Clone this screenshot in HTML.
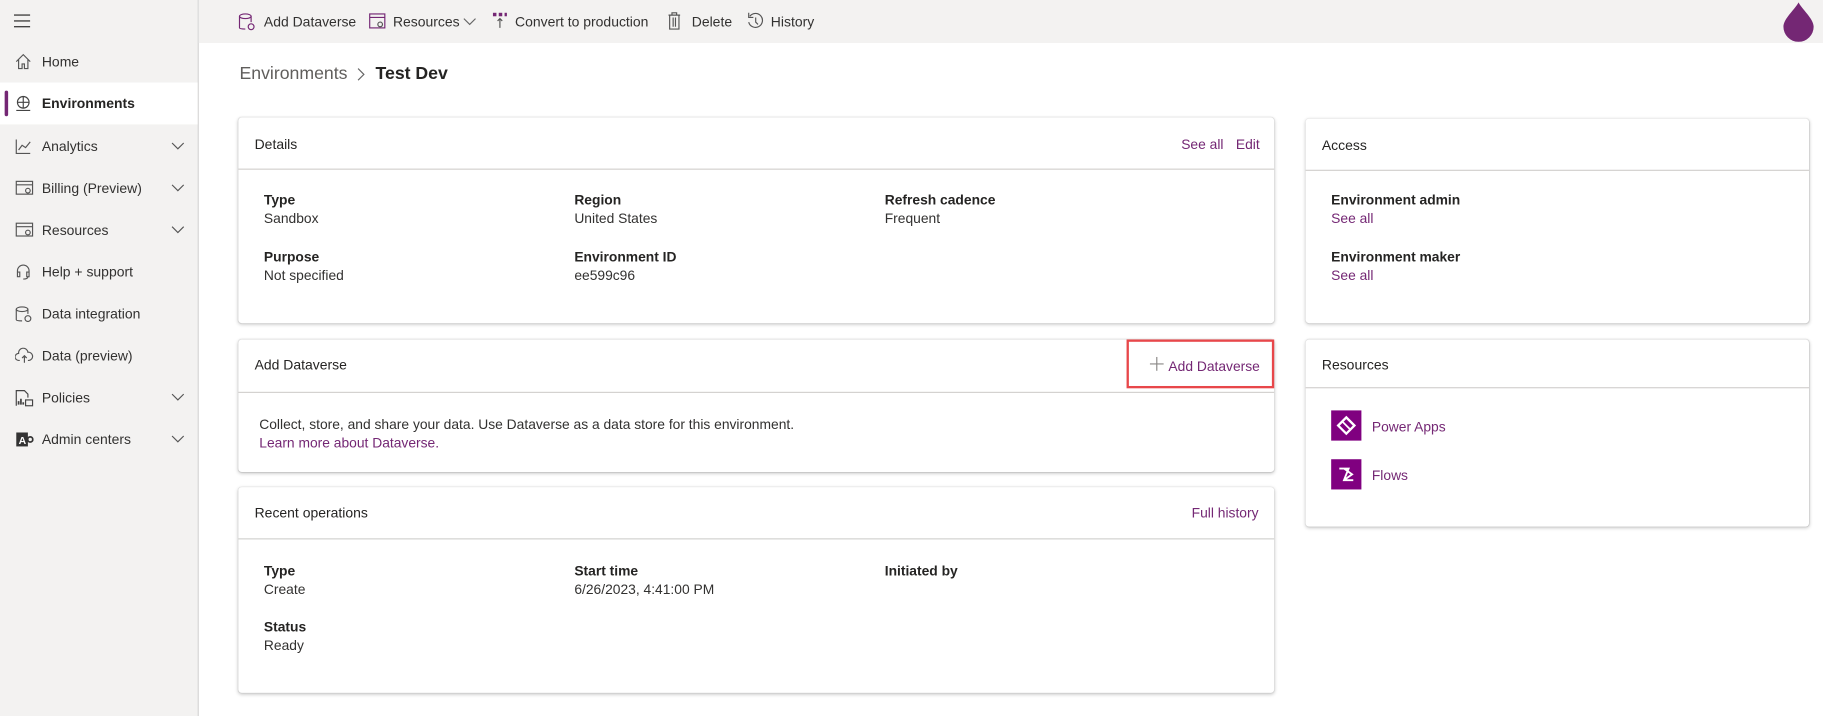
<!DOCTYPE html>
<html><head><meta charset="utf-8"><style>
*{box-sizing:border-box;margin:0;padding:0}
html,body{width:1823px;height:716px;overflow:hidden;background:#fff}
#s{position:absolute;left:0;top:0;width:1568px;height:616px;transform:scale(1.1626);transform-origin:0 0;font-family:"Liberation Sans",sans-serif;color:#323130;font-size:11.9px}
.a{position:absolute;white-space:nowrap}
.side{position:absolute;left:0;top:0;width:171px;height:616px;background:#f3f2f1;border-right:1px solid #d6d6d6}
.top{position:absolute;left:171px;top:0;width:1397px;height:37px;background:#f3f2f1}
.nav{position:absolute;left:0;width:170px;height:36px}
.nav span{position:absolute;left:36px;top:11px;font-size:12px}
.nav svg.i{position:absolute;left:13px;top:11px}
.nav svg.c{position:absolute;left:147px;top:14px}
.card{position:absolute;background:#fff;border-radius:3px;box-shadow:0 1px 3px rgba(0,0,0,.22),0 0 1px rgba(0,0,0,.15)}
.hd{position:absolute;left:0;right:0;border-bottom:1px solid #d2d0ce}
.t{position:absolute;left:14px;font-size:12px;color:#252423}
.lk{color:#742774}
.b{font-weight:bold;color:#252423}
.tb{position:absolute;top:12px;font-size:12px;color:#323130}
</style></head><body><div id="s">
<div class="side">
 <svg class="a" style="left:12px;top:12px" width="14" height="12"><path d="M0 1h14M0 6h14M0 11h14" stroke="#444" stroke-width="1.2"/></svg>
 <div class="nav" style="top:35px"><svg class="i" width="14" height="14"><path d="M1 7L7 1l6 6M3 5v8h3V9h2v4h3V5" fill="none" stroke="#555"/></svg><span>Home</span></div>
 <div class="nav" style="top:71px;background:#fff"><div class="a" style="left:4px;top:7px;width:3px;height:22px;background:#742774;border-radius:2px"></div><svg class="i" width="14" height="14"><circle cx="7" cy="6" r="5" fill="none" stroke="#444"/><path d="M2 6h10M7 1v10M1 13h12" stroke="#444"/></svg><span style="font-weight:bold;color:#252423">Environments</span></div>
 <div class="nav" style="top:108px"><svg class="i" width="14" height="14"><path d="M1 1v12h12M3 10l3-4 3 2 4-5" fill="none" stroke="#555"/></svg><span>Analytics</span><svg class="c" width="12" height="8"><path d="M1 1l5 5 5-5" fill="none" stroke="#555"/></svg></div>
 <div class="nav" style="top:144px"><svg class="i" width="16" height="14"><rect x="1" y="1" width="14" height="11" fill="none" stroke="#555"/><path d="M1 4h14" stroke="#555"/><circle cx="11" cy="9" r="2" fill="none" stroke="#555"/></svg><span>Billing (Preview)</span><svg class="c" width="12" height="8"><path d="M1 1l5 5 5-5" fill="none" stroke="#555"/></svg></div>
 <div class="nav" style="top:180px"><svg class="i" width="16" height="14"><rect x="1" y="1" width="14" height="11" fill="none" stroke="#555"/><path d="M1 4h14" stroke="#555"/><circle cx="11" cy="9" r="2" fill="none" stroke="#555"/></svg><span>Resources</span><svg class="c" width="12" height="8"><path d="M1 1l5 5 5-5" fill="none" stroke="#555"/></svg></div>
 <div class="nav" style="top:216px"><svg class="i" width="14" height="14"><path d="M2 9V6a5 5 0 0110 0v3M2 7h2v4H2zM10 7h2v4h-2zM11 11q0 2-4 2" fill="none" stroke="#555"/></svg><span>Help + support</span></div>
 <div class="nav" style="top:252px"><svg class="i" width="16" height="14"><ellipse cx="6" cy="3" rx="5" ry="2" fill="none" stroke="#555"/><path d="M1 3v9q0 1 5 1M11 3v4" fill="none" stroke="#555"/><circle cx="11" cy="11" r="2.5" fill="none" stroke="#555"/></svg><span>Data integration</span></div>
 <div class="nav" style="top:288px"><svg class="i" width="16" height="14"><path d="M4 11H3a3 3 0 010-6 4 4 0 018-1 3 3 0 011 7h-1M8 13V7M6 9l2-2 2 2" fill="none" stroke="#555"/></svg><span>Data (preview)</span></div>
 <div class="nav" style="top:324px"><svg class="i" width="16" height="15"><path d="M1 14V1h7l3 3v3" fill="none" stroke="#444"/><path d="M3 13V10M5 13V8M7 13v-2" stroke="#444" stroke-width="1.5"/><rect x="9" y="9" width="6" height="5" fill="none" stroke="#444"/></svg><span>Policies</span><svg class="c" width="12" height="8"><path d="M1 1l5 5 5-5" fill="none" stroke="#555"/></svg></div>
 <div class="nav" style="top:360px"><svg class="i" width="16" height="14"><rect x="1" y="1" width="10" height="12" fill="#333"/><text x="3" y="11" font-size="9" fill="#fff" font-family="Liberation Sans" font-weight="bold">A</text><circle cx="13" cy="7" r="2.2" fill="none" stroke="#333" stroke-width="1.5"/></svg><span>Admin centers</span><svg class="c" width="12" height="8"><path d="M1 1l5 5 5-5" fill="none" stroke="#555"/></svg></div>
</div>
<div class="top">
 <svg class="a" style="left:34px;top:11px" width="15" height="16"><ellipse cx="6" cy="3" rx="5" ry="2" fill="none" stroke="#742774"/><path d="M1 3v10q0 1 5 1M11 3v5" fill="none" stroke="#742774"/><circle cx="11" cy="12" r="2.5" fill="none" stroke="#742774"/></svg>
 <span class="tb" style="left:56px">Add Dataverse</span>
 <svg class="a" style="left:146px;top:11px" width="16" height="15"><rect x="1" y="1" width="13" height="12" fill="none" stroke="#742774"/><path d="M1 4h13" stroke="#742774"/><circle cx="10" cy="10" r="2" fill="none" stroke="#555"/></svg>
 <span class="tb" style="left:167px">Resources</span>
 <svg class="a" style="left:227px;top:15px" width="12" height="8"><path d="M1 1l5 5 5-5" fill="none" stroke="#666"/></svg>
 <svg class="a" style="left:252px;top:10px" width="14" height="16"><rect x="1" y="1" width="3" height="3" fill="#742774"/><rect x="6" y="1" width="3" height="3" fill="#742774"/><rect x="11" y="1" width="2" height="3" fill="#742774"/><path d="M7 14V6M5 8l2-2 2 2" fill="none" stroke="#555"/></svg>
 <span class="tb" style="left:272px">Convert to production</span>
 <svg class="a" style="left:403px;top:10px" width="12" height="16"><path d="M1 3h10M4 3V1h4v2M2 3v12h8V3M5 5v8M7 5v8" fill="none" stroke="#555"/></svg>
 <span class="tb" style="left:424px">Delete</span>
 <svg class="a" style="left:471px;top:10px" width="16" height="16"><path d="M3 4a6 6 0 11-1 5M2 1v4h4M8 5v4l2 2" fill="none" stroke="#555"/></svg>
 <span class="tb" style="left:492px">History</span>
 <svg class="a" style="left:1362px;top:2px" width="28" height="34"><path d="M14 0C11 6 1 14 1 21a13 13 0 0026 0C27 14 17 6 14 0z" fill="#742774"/></svg>
</div>
<span class="a" style="left:206px;top:55px;font-size:15.2px;color:#605e5c">Environments</span>
<svg class="a" style="left:307px;top:58px" width="8" height="12"><path d="M1 1l5 5-5 5" fill="none" stroke="#666"/></svg>
<span class="a" style="left:323px;top:55px;font-size:15.2px;font-weight:bold;color:#252423">Test Dev</span>

<div class="card" style="left:205px;top:101px;width:891px;height:177px">
 <div class="hd" style="top:0;height:45px"></div>
 <span class="a t" style="top:16px">Details</span>
 <span class="a lk" style="left:811px;top:16px">See all</span><span class="a lk" style="left:858px;top:16px">Edit</span>
 <span class="a b" style="left:22px;top:64px">Type</span><span class="a" style="left:22px;top:80px">Sandbox</span>
 <span class="a b" style="left:22px;top:113px">Purpose</span><span class="a" style="left:22px;top:129px">Not specified</span>
 <span class="a b" style="left:289px;top:64px">Region</span><span class="a" style="left:289px;top:80px">United States</span>
 <span class="a b" style="left:289px;top:113px">Environment ID</span><span class="a" style="left:289px;top:129px">ee599c96</span>
 <span class="a b" style="left:556px;top:64px">Refresh cadence</span><span class="a" style="left:556px;top:80px">Frequent</span>
</div>

<div class="card" style="left:205px;top:292px;width:891px;height:114px">
 <div class="hd" style="top:0;height:46px"></div>
 <span class="a t" style="top:15px">Add Dataverse</span>
 <div class="a" style="left:764px;top:0;width:127px;height:42px;border:2px solid #e8474a"></div>
 <svg class="a" style="left:784px;top:15px" width="12" height="12"><path d="M6 0v12M0 6h12" stroke="#8a8886"/></svg>
 <span class="a lk" style="left:800px;top:16px">Add Dataverse</span>
 <span class="a" style="left:18px;top:66px">Collect, store, and share your data. Use Dataverse as a data store for this environment.</span>
 <span class="a lk" style="left:18px;top:82px">Learn more about Dataverse.</span>
</div>

<div class="card" style="left:205px;top:419px;width:891px;height:177px">
 <div class="hd" style="top:0;height:45px"></div>
 <span class="a t" style="top:15px">Recent operations</span>
 <span class="a lk" style="left:820px;top:15px">Full history</span>
 <span class="a b" style="left:22px;top:65px">Type</span><span class="a" style="left:22px;top:81px">Create</span>
 <span class="a b" style="left:22px;top:113px">Status</span><span class="a" style="left:22px;top:129px">Ready</span>
 <span class="a b" style="left:289px;top:65px">Start time</span><span class="a" style="left:289px;top:81px">6/26/2023, 4:41:00 PM</span>
 <span class="a b" style="left:556px;top:65px">Initiated by</span>
</div>

<div class="card" style="left:1123px;top:102px;width:433px;height:176px">
 <div class="hd" style="top:0;height:45px"></div>
 <span class="a t" style="top:16px">Access</span>
 <span class="a b" style="left:22px;top:63px">Environment admin</span><span class="a lk" style="left:22px;top:79px">See all</span>
 <span class="a b" style="left:22px;top:112px">Environment maker</span><span class="a lk" style="left:22px;top:128px">See all</span>
</div>

<div class="card" style="left:1123px;top:292px;width:433px;height:161px">
 <div class="hd" style="top:0;height:42px"></div>
 <span class="a t" style="top:15px">Resources</span>
 <div class="a" style="left:22px;top:61px;width:26px;height:26px;background:#800080"><svg width="26" height="26"><path d="M13 6l7 7-7 7-7-7z" fill="none" stroke="#fff" stroke-width="2"/><path d="M10 10l6 6" stroke="#fff" stroke-width="1.5"/></svg></div>
 <span class="a lk" style="left:57px;top:68px">Power Apps</span>
 <div class="a" style="left:22px;top:103px;width:26px;height:26px;background:#800080"><svg width="26" height="26"><path d="M7 8h8l-4 10h8M11 8l7 5-7 5" fill="none" stroke="#fff" stroke-width="1.6"/></svg></div>
 <span class="a lk" style="left:57px;top:110px">Flows</span>
</div>
</div></body></html>
